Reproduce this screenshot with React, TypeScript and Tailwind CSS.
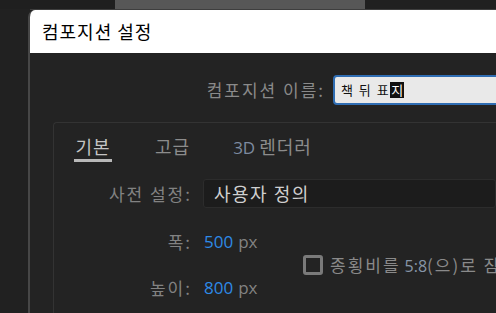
import React from "react";

const kr = { fontFamily: '"Noto Sans CJK KR", "Noto Sans", sans-serif' };
const num = { fontFamily: '"Open Sans", "Noto Sans", sans-serif' };

export default function App() {
  return (
    <div className="w-[496px] h-[313px] bg-[#212121] overflow-hidden flex flex-col" style={kr}>
      {/* top strip behind dialog */}
      <div className="h-[9px] flex shrink-0">
        <div className="w-[115px] bg-[#1f1f1f]" />
        <div className="w-[250px] bg-[#575757]" />
        <div className="flex-1 bg-[#202020]" />
      </div>
      <div className="h-[1px] bg-[#3e3e3e] shrink-0 ml-[30px]" />

      {/* dialog */}
      <div className="ml-[28px] flex-1 flex flex-col rounded-tl-[7px] border-l-2 border-[#474747] overflow-hidden bg-[#232323]">
        {/* title bar */}
        <div className="h-[43px] bg-white flex items-center pl-[12px] shrink-0">
          <span className="text-[18px] text-black tracking-[1px]">컴포지션 설정</span>
        </div>

        {/* name row */}
        <div className="flex items-center mt-[22px]">
          <div className="w-[295px] shrink-0 text-right text-[17px] text-[#8a8a8a] tracking-[2px]">컴포지션 이름:</div>
          <div className="ml-[8px] -mr-[20px] flex-1 h-[30px] bg-[#e9e9e9] border-2 border-[#2f6db3] rounded-[4px] flex items-center pl-[6px]">
            <span className="text-[13px] text-[#111] tracking-[1.5px]">책 뒤 표</span>
            <span className="text-[13px] bg-[#111] text-white leading-[16px] px-[1px]">지</span>
          </div>
        </div>

        {/* panel */}
        <div className="ml-[23px] mt-[17px] flex-1 border-l border-t border-[#333333] rounded-tl-[4px] flex flex-col">
          {/* tabs */}
          <div className="flex items-start pl-[20px] pt-[11px] h-[56px] shrink-0">
            <div className="flex flex-col items-center">
              <span className="text-[18px] text-[#c4c4c4] leading-[24px] tracking-[1px]">기본</span>
              <div className="mt-[1px] w-[38px] h-[3px] bg-[#b8b8b8]" />
            </div>
            <span className="ml-[43px] text-[18px] text-[#8c8c8c] leading-[24px] tracking-[1px]">고급</span>
            <span className="ml-[43px] text-[18px] text-[#8c8c8c] leading-[24px] tracking-[1px] flex items-baseline">
              <span className="text-[17px] text-[#7d8ba0] mr-[4px] tracking-normal" style={num}>3D</span>
              렌더러
            </span>
          </div>

          {/* preset row */}
          <div className="flex items-center">
            <div className="w-[138px] shrink-0 text-right text-[17px] text-[#828282] tracking-[2px]">사전 설정:</div>
            <div className="ml-[11px] flex-1 h-[29px] bg-[#1c1c1c] border border-[#2c2c2c] rounded-[3px] flex items-center pl-[10px]">
              <span className="text-[18px] text-[#d0d0d0] tracking-[1.5px]">사용자 정의</span>
            </div>
          </div>

          {/* size rows */}
          <div className="flex items-center mt-[22px]">
            <div className="flex flex-col gap-[22px] w-[248px] shrink-0">
              <div className="flex items-center h-[24px]">
                <div className="w-[138px] text-right text-[17px] text-[#828282] tracking-[2px]">폭:</div>
                <span className="ml-[12px] text-[17px] text-[#2e8ae6]" style={num}>500</span>
                <span className="ml-[5px] text-[17px] text-[#828282]" style={num}>px</span>
              </div>
              <div className="flex items-center h-[24px]">
                <div className="w-[138px] text-right text-[17px] text-[#828282] tracking-[2px]">높이:</div>
                <span className="ml-[12px] text-[17px] text-[#2e8ae6]" style={num}>800</span>
                <span className="ml-[5px] text-[17px] text-[#828282]" style={num}>px</span>
              </div>
            </div>
            <div className="flex items-center whitespace-nowrap ml-[1px]">
              <div className="w-[20px] h-[20px] shrink-0 border-[3px] border-[#7a7a7a] rounded-[3px]" />
              <span className="ml-[7px] text-[17px] text-[#8a8a8a] tracking-[2px] flex items-baseline">
                종횡비를
                <span className="ml-[4px] text-[16px] text-[#8796a8] tracking-normal" style={num}>5:8</span>
                (으)로 잠금
              </span>
            </div>
          </div>
        </div>
      </div>
    </div>
  );
}
